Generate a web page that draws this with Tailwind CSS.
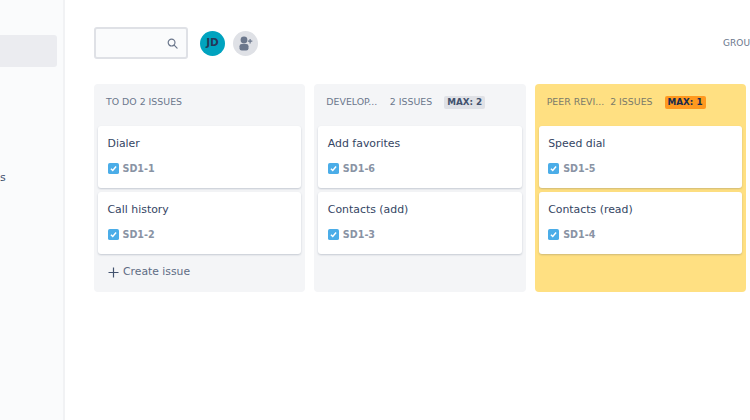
<!DOCTYPE html>
<html lang="en">

<head>
    <meta charset="UTF-8">
    <title>Board</title>
    <script src="https://cdn.jsdelivr.net/npm/@tailwindcss/browser@4"></script>
</head>

<body class="overflow-hidden">
    <div class="flex h-[420px] w-[750px] overflow-hidden bg-white font-['DejaVu_Sans',sans-serif] text-[#42526e]">
        <!-- sidebar, cut off by the window -->
        <div class="h-full w-[65px] shrink-0 overflow-hidden border-r-2 border-[#f1f2f4] bg-[#fafbfc] pt-[35px]">
            <div class="h-[32px] w-[57px] rounded-r-[3px] bg-[#ebecf0]"></div>
            <p class="mt-[103px] text-[11px] leading-[16px] text-[#42526e]">s</p>
        </div>

        <div class="min-w-0 flex-1 pl-[29px]">
            <div class="flex h-[84px] items-start pt-[27px]">
                <div class="flex h-[32px] w-[94px] items-center justify-end rounded-[3px] border-2 border-[#dfe1e6] bg-[#fafbfc] pr-[8px]">
                    <svg width="11" height="11" viewBox="0 0 12 12" fill="none" stroke="#6b778c" stroke-width="1.3">
                        <circle cx="5" cy="5" r="3.7" />
                        <path d="M7.8 7.8 L11 11" stroke-linecap="round" />
                    </svg>
                </div>
                <div class="ml-[12px] mt-[3.5px] flex h-[25px] w-[25px] items-center justify-center rounded-full bg-[#00a3bf] text-[10.5px] font-bold text-[#253858]">JD</div>
                <div class="ml-[8px] mt-[3.5px] flex h-[25px] w-[25px] items-center justify-center rounded-full bg-[#dfe1e6]">
                    <svg width="17" height="17" viewBox="0 0 17 17" fill="#6b778c">
                        <circle cx="7" cy="5" r="3.4" />
                        <rect x="2.5" y="9" width="9" height="6.5" rx="2.2" />
                        <path d="M12.5 4h1.2v1.600h1.600v1.200h-1.600v1.600h-1.200V6.800h-1.600V5.600h1.600z" />
                    </svg>
                </div>
                <span class="ml-auto mt-[11px] shrink-0 text-[9px] leading-[10px] text-[#6b778c]">GROU</span>
            </div>

            <div class="grid w-[652px] grid-cols-3 gap-[9px]">
                <!-- to do -->
                <div class="h-[208px] rounded-[4px] bg-[#f4f5f7] px-[4px]">
                    <div class="flex h-[36px] items-center pl-[8px] text-[9.4px] text-[#6b778c]">TO DO 2 ISSUES</div>
                    <div class="mt-[6px] flex flex-col gap-[4px]">
                        <div class="h-[62px] rounded-[3px] bg-white pl-[9.5px] pt-[9px] shadow-[0_1px_2px_rgba(9,30,66,0.2)]">
                            <p class="text-[10.9px] leading-[17px] text-[#344563]">Dialer</p>
                            <div class="mt-[9px] flex items-center gap-[4px]">
                                <svg width="11" height="11" viewBox="0 0 12 12">
                                    <rect width="12" height="12" rx="2" fill="#4bade8" />
                                    <path d="M3.2 6.2 L5.2 8.2 L8.8 3.900" fill="none" stroke="#fff" stroke-width="1.6" />
                                </svg>
                                <span class="pt-[1px] text-[9.600px] font-bold text-[#8993a4]">SD1-1</span>
                            </div>
                        </div>
                        <div class="h-[62px] rounded-[3px] bg-white pl-[9.5px] pt-[9px] shadow-[0_1px_2px_rgba(9,30,66,0.2)]">
                            <p class="text-[10.9px] leading-[17px] text-[#344563]">Call history</p>
                            <div class="mt-[9px] flex items-center gap-[4px]">
                                <svg width="11" height="11" viewBox="0 0 12 12">
                                    <rect width="12" height="12" rx="2" fill="#4bade8" />
                                    <path d="M3.2 6.2 L5.2 8.2 L8.8 3.900" fill="none" stroke="#fff" stroke-width="1.6" />
                                </svg>
                                <span class="pt-[1px] text-[9.600px] font-bold text-[#8993a4]">SD1-2</span>
                            </div>
                        </div>
                    </div>
                    <div class="mt-[9px] flex h-[18px] items-center gap-[4px] pl-[10px] text-[10.8px] text-[#5e6c84]">
                        <svg width="11" height="11" viewBox="0 0 11 11" stroke="#42526e" stroke-width="1.2">
                            <path d="M5.5 0.5v10M0.5 5.5h10" />
                        </svg>
                        Create issue
                    </div>
                </div>

                <!-- development -->
                <div class="h-[208px] rounded-[4px] bg-[#f4f5f7] px-[4px]">
                    <div class="flex h-[36px] items-center pl-[8px] text-[9.4px] text-[#6b778c]">
                        <span class="w-[63.5px] whitespace-nowrap">DEVELOP...</span>
                        <span>2 ISSUES</span>
                        <span class="ml-[12px] flex h-[13px] items-center rounded-[2px] bg-[#dfe1e6] px-[3px] pt-[1px] text-[8.8px] font-bold text-[#42526e]">MAX: 2</span>
                    </div>
                    <div class="mt-[6px] flex flex-col gap-[4px]">
                        <div class="h-[62px] rounded-[3px] bg-white pl-[9.5px] pt-[9px] shadow-[0_1px_2px_rgba(9,30,66,0.2)]">
                            <p class="text-[10.9px] leading-[17px] text-[#344563]">Add favorites</p>
                            <div class="mt-[9px] flex items-center gap-[4px]">
                                <svg width="11" height="11" viewBox="0 0 12 12">
                                    <rect width="12" height="12" rx="2" fill="#4bade8" />
                                    <path d="M3.2 6.2 L5.2 8.2 L8.8 3.900" fill="none" stroke="#fff" stroke-width="1.6" />
                                </svg>
                                <span class="pt-[1px] text-[9.600px] font-bold text-[#8993a4]">SD1-6</span>
                            </div>
                        </div>
                        <div class="h-[62px] rounded-[3px] bg-white pl-[9.5px] pt-[9px] shadow-[0_1px_2px_rgba(9,30,66,0.2)]">
                            <p class="text-[10.9px] leading-[17px] text-[#344563]">Contacts (add)</p>
                            <div class="mt-[9px] flex items-center gap-[4px]">
                                <svg width="11" height="11" viewBox="0 0 12 12">
                                    <rect width="12" height="12" rx="2" fill="#4bade8" />
                                    <path d="M3.2 6.2 L5.2 8.2 L8.8 3.900" fill="none" stroke="#fff" stroke-width="1.6" />
                                </svg>
                                <span class="pt-[1px] text-[9.600px] font-bold text-[#8993a4]">SD1-3</span>
                            </div>
                        </div>
                    </div>
                </div>

                <!-- peer review, over limit -->
                <div class="h-[208px] rounded-[4px] bg-[#ffe082] px-[4px]">
                    <div class="flex h-[36px] items-center pl-[8px] text-[9.4px] text-[#7a7a6a]">
                        <span class="w-[63.5px] whitespace-nowrap">PEER REVI...</span>
                        <span>2 ISSUES</span>
                        <span class="ml-[12px] flex h-[13px] items-center rounded-[2px] bg-[#ff991f] px-[3px] pt-[1px] text-[8.8px] font-bold text-[#172b4d]">MAX: 1</span>
                    </div>
                    <div class="mt-[6px] flex flex-col gap-[4px]">
                        <div class="h-[62px] rounded-[3px] bg-white pl-[9.5px] pt-[9px] shadow-[0_1px_2px_rgba(9,30,66,0.2)]">
                            <p class="text-[10.9px] leading-[17px] text-[#344563]">Speed dial</p>
                            <div class="mt-[9px] flex items-center gap-[4px]">
                                <svg width="11" height="11" viewBox="0 0 12 12">
                                    <rect width="12" height="12" rx="2" fill="#4bade8" />
                                    <path d="M3.2 6.2 L5.2 8.2 L8.8 3.900" fill="none" stroke="#fff" stroke-width="1.6" />
                                </svg>
                                <span class="pt-[1px] text-[9.600px] font-bold text-[#8993a4]">SD1-5</span>
                            </div>
                        </div>
                        <div class="h-[62px] rounded-[3px] bg-white pl-[9.5px] pt-[9px] shadow-[0_1px_2px_rgba(9,30,66,0.2)]">
                            <p class="text-[10.9px] leading-[17px] text-[#344563]">Contacts (read)</p>
                            <div class="mt-[9px] flex items-center gap-[4px]">
                                <svg width="11" height="11" viewBox="0 0 12 12">
                                    <rect width="12" height="12" rx="2" fill="#4bade8" />
                                    <path d="M3.2 6.2 L5.2 8.2 L8.8 3.900" fill="none" stroke="#fff" stroke-width="1.6" />
                                </svg>
                                <span class="pt-[1px] text-[9.600px] font-bold text-[#8993a4]">SD1-4</span>
                            </div>
                        </div>
                    </div>
                </div>
            </div>
        </div>
    </div>
</body>

</html>
